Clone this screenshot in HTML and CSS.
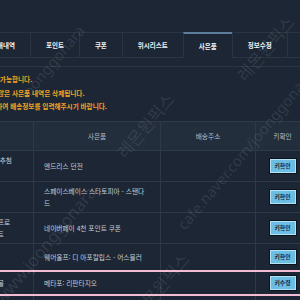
FILE: index.html
```html
<!DOCTYPE html>
<html lang="ko">
<head>
    <meta charset="UTF-8">
    <meta name="viewport" content="width=device-width, initial-scale=1.0">
    <title>사은품</title>
    <link rel="stylesheet" href="styles.css">
</head>
<body>

<div class="page">
    <div class="tabs">
        <div class="tab">구매내역</div>
        <div class="tab">포인트</div>
        <div class="tab">쿠폰</div>
        <div class="tab">위시리스트</div>
        <div class="tab active">사은품</div>
        <div class="tab">정보수정</div>
        <div class="tab">회원탈퇴</div>
    </div>
    <div class="tab-rule"></div>

    <div class="notice">
        <p>당첨 확인 후 신청 가능합니다.</p>
        <p>기한 내 신청하지 않은 사은품 내역은 삭제됩니다.</p>
        <p>사은품 수령을 위하여 배송정보를 입력해주시기 바랍니다.</p>
    </div>

    <table class="gift-table">
        <colgroup>
            <col class="col-event">
            <col class="col-gift">
            <col class="col-address">
            <col class="col-key">
        </colgroup>
        <thead>
            <tr>
                <th>이벤트</th>
                <th>사은품</th>
                <th>배송주소</th>
                <th>키확인</th>
            </tr>
        </thead>
        <tbody>
            <tr>
                <td>신규 회원 이벤트 추첨<br>당첨</td>
                <td>엔드리스 던전</td>
                <td></td>
                <td class="key"><span class="btn">키확인</span></td>
            </tr>
            <tr>
                <td>출석</td>
                <td>스페이스베이스 스타토피아 - 스탠다드</td>
                <td></td>
                <td class="key"><span class="btn">키확인</span></td>
            </tr>
            <tr>
                <td>네이버페이 참가 프로<br>모션 참여자 이벤트</td>
                <td>네이버페이 4천 포인트 쿠폰</td>
                <td></td>
                <td class="key"><span class="btn">키확인</span></td>
            </tr>
            <tr>
                <td>리뷰</td>
                <td>웨어울프: 디 아포칼립스 - 어스블러</td>
                <td></td>
                <td class="key"><span class="btn">키확인</span></td>
            </tr>
            <tr class="highlight">
                <td>예약구매 특전 선물</td>
                <td>메타포: 리판타지오</td>
                <td></td>
                <td class="key"><span class="btn">키수령</span></td>
            </tr>
            <tr>
                <td>출석</td>
                <td>스타듀 밸리</td>
                <td></td>
                <td class="key"><span class="btn">키확인</span></td>
            </tr>
        </tbody>
    </table>
</div>

<!-- watermark overlay -->
<div class="watermarks">
    <span class="wm wm-1">joonggonara</span>
    <span class="wm wm-2">www.joonggonara</span>
    <span class="wm wm-3">레몬윈픽스</span>
    <span class="wm wm-4">레몬윈픽스</span>
    <span class="wm wm-5">cafe.naver.com/joonggonara</span>
    <span class="wm wm-6">레몬윈픽스</span>
</div>

</body>
</html>
```
FILE: styles.css
```css
body {
    margin: 0;
    background: #1c2634;
    font-family: "Noto Sans CJK KR", "Noto Sans", sans-serif;
    font-size: 6.7px;
    color: #c5ced8;
    overflow: hidden;
    position: relative;
    height: 300px;
}
.page {
    margin-left: -60px;
    width: 440px;
    padding-top: 32px;
}
.tabs {
    display: flex;
    height: 26px;
    padding-left: 36px;
    box-sizing: border-box;
    border-bottom: 1px solid #2a3543;
}
.tab {
    display: flex;
    align-items: center;
    padding: 0 15px;
    border: 1px solid #2a3543;
    border-bottom: none;
    margin-left: -1px;
    color: #eef2f6;
    font-size: 6.5px;
    font-weight: bold;
}
.tab.active {
    border-top: 2px solid #5d7d9c;
    margin-bottom: -1px;
    background: #1c2634;
}
.tab-rule {
    height: 8px;
    border-bottom: 1px solid #2a3543;
}
.notice {
    padding: 6px 10px 0;
    margin-bottom: 7px;
}
.notice p {
    margin: 0;
    line-height: 13.5px;
    color: #f2a426;
    font-size: 6.6px;
    font-weight: bold;
}
.gift-table {
    border-collapse: collapse;
    table-layout: fixed;
    width: 369px;
}
.col-event { width: 93px; }
.col-gift { width: 127px; }
.col-address { width: 95px; }
.col-key { width: 54px; }
.gift-table th,
.gift-table td {
    border: 1px solid #2d3947;
    line-height: 12px;
    vertical-align: middle;
}
.gift-table th {
    padding: 8px 10px;
    background: #222e3c;
    color: #b4bec9;
    font-weight: normal;
}
.gift-table td {
    padding: 3px 10px;
    height: 20px;
    text-align: left;
}
.gift-table td.key {
    padding: 3px 0;
    text-align: center;
}
.gift-table tr.highlight td {
    height: 16px;
    border-top: 2px solid #f3bcd3;
    border-bottom: 2px solid #f3bcd3;
}
.btn {
    display: inline-block;
    width: 28px;
    height: 16px;
    box-sizing: border-box;
    line-height: 14px;
    background: #6cbde4;
    border: 1px solid #0c131c;
    box-shadow: inset 0 0 0 1px #b3e1f6;
    color: #1a2735;
    font-size: 5.8px;
    font-weight: bold;
    text-align: center;
    vertical-align: middle;
}
.watermarks {
    position: absolute;
    top: 0;
    left: 0;
    width: 300px;
    height: 300px;
    pointer-events: none;
}
.wm {
    position: absolute;
    white-space: nowrap;
    color: rgba(255, 255, 255, 0.1);
    font-family: "Noto Sans", sans-serif;
    font-size: 15px;
    transform: translate(-50%, -50%) rotate(-50deg);
}
.wm-1 { left: 52px; top: 62px; }
.wm-2 { left: 45px; top: 245px; font-size: 17px; }
.wm-3 { left: 265px; top: 48px; font-family: "Noto Sans CJK KR", sans-serif; font-size: 17px; }
.wm-4 { left: 145px; top: 125px; font-family: "Noto Sans CJK KR", sans-serif; font-size: 17px; }
.wm-5 { left: 245px; top: 150px; font-size: 15px; }
.wm-6 { left: 160px; top: 285px; font-family: "Noto Sans CJK KR", sans-serif; font-size: 17px; }
```
